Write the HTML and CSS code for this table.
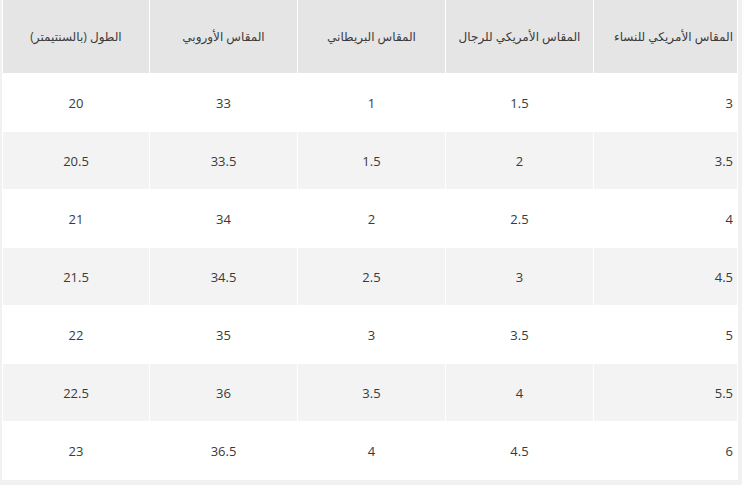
FILE: index.html
```html
<!DOCTYPE html>
<html lang="ar" dir="rtl">
<head>
<meta charset="utf-8">
<title>جدول المقاسات</title>
<link rel="stylesheet" href="styles.css">
</head>
<body>
<div class="wrap">
<table class="sizes">
  <colgroup>
    <col class="c1"><col class="c2"><col class="c3"><col class="c4"><col class="c5">
  </colgroup>
  <thead>
    <tr>
      <th>المقاس الأمريكي للنساء</th>
      <th>المقاس الأمريكي للرجال</th>
      <th>المقاس البريطاني</th>
      <th>المقاس الأوروبي</th>
      <th>الطول (بالسنتيمتر)</th>
    </tr>
  </thead>
  <tbody>
    <tr><td>3</td><td>1.5</td><td>1</td><td>33</td><td>20</td></tr>
    <tr><td>3.5</td><td>2</td><td>1.5</td><td>33.5</td><td>20.5</td></tr>
    <tr><td>4</td><td>2.5</td><td>2</td><td>34</td><td>21</td></tr>
    <tr><td>4.5</td><td>3</td><td>2.5</td><td>34.5</td><td>21.5</td></tr>
    <tr><td>5</td><td>3.5</td><td>3</td><td>35</td><td>22</td></tr>
    <tr><td>5.5</td><td>4</td><td>3.5</td><td>36</td><td>22.5</td></tr>
    <tr><td>6</td><td>4.5</td><td>4</td><td>36.5</td><td>23</td></tr>
  </tbody>
</table>
</div>
</body>
</html>
```

FILE: styles.css
```css
html, body {
  margin: 0;
  padding: 0;
  background: #f1f1f1;
}
.wrap {
  padding: 0 4px 6px 3px;
}
.sizes {
  width: 735px;
  border-collapse: collapse;
  table-layout: fixed;
  font-family: "Open Sans", "DejaVu Sans", sans-serif;
  font-size: 13px;
  color: #3a3a3a;
}
.c1 { width: 144px; }
.c2 { width: 148px; }
.c3 { width: 148px; }
.c4 { width: 148px; }
.c5 { width: 147px; }
.sizes th,
.sizes td {
  border: 1px solid #fff;
  text-align: center;
  vertical-align: middle;
  padding: 0 8px;
}
.sizes th {
  height: 73px;
  background: #e5e5e5;
  font-weight: normal;
  font-size: 12px;
}
.sizes td {
  height: 57px;
  background: #fff;
}
.sizes tbody tr:nth-child(even) td {
  background: #f3f3f3;
}
.sizes th:first-child,
.sizes td:first-child {
  text-align: right;
  padding-right: 4px;
}
.sizes thead tr th { border-top: 0; }
```
